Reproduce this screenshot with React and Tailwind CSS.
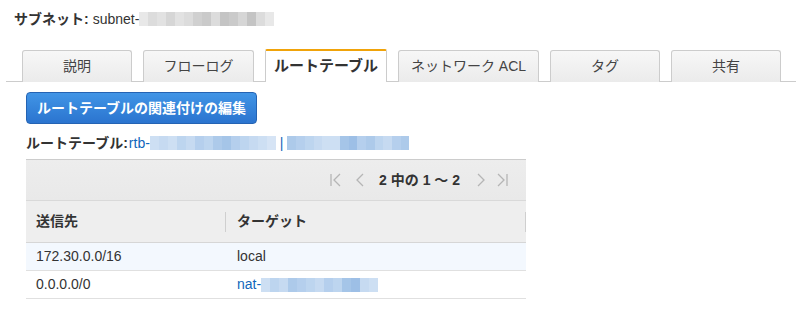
import React from 'react'

const font = { fontFamily: '"Liberation Sans", "Noto Sans CJK JP", sans-serif' }

// pixelated "masked" id blocks
function Mosaic({ cells, color, className = '' }) {
  return (
    <span className={`inline-flex h-[14px] align-middle ${className}`}>
      {cells.map((o, i) => (
        <span key={i} className="h-full w-[9px]" style={{ backgroundColor: color, opacity: o }} />
      ))}
    </span>
  )
}

const grayCells = [0.2, 0.3, 0.25, 0.35, 0.25, 0.3, 0.4, 0.45, 0.3, 0.5, 0.45, 0.35, 0.5, 0.3, 0.2]
const blueCells = [0.3, 0.35, 0.3, 0.4, 0.35, 0.45, 0.4, 0.5, 0.55, 0.45, 0.4, 0.35, 0.3, 0.25]
const blueCells2 = [0.5, 0.45, 0.4, 0.35, 0.3, 0.3, 0.55, 0.6, 0.45, 0.5, 0.4, 0.35, 0.45, 0.5]
const natCells = [0.3, 0.4, 0.35, 0.5, 0.45, 0.4, 0.35, 0.45, 0.4, 0.55, 0.6, 0.35, 0.3]

const tabs = [
  { label: '説明', w: 'w-[110px]' },
  { label: 'フローログ', w: 'w-[111px]' },
  { label: 'ルートテーブル', w: 'w-[122px]', active: true },
  { label: 'ネットワーク ACL', w: 'w-[141px]' },
  { label: 'タグ', w: 'w-[110px]' },
  { label: '共有', w: 'w-[110px]' },
]

function FirstIcon() {
  return (
    <svg width="11" height="14" viewBox="0 0 11 14" fill="none" stroke="#b5b5b5" strokeWidth="1.3">
      <path d="M1 1v12M10 1L4 7l6 6" />
    </svg>
  )
}
function PrevIcon() {
  return (
    <svg width="8" height="14" viewBox="0 0 8 14" fill="none" stroke="#b5b5b5" strokeWidth="1.3">
      <path d="M7 1L1 7l6 6" />
    </svg>
  )
}
function NextIcon() {
  return (
    <svg width="8" height="14" viewBox="0 0 8 14" fill="none" stroke="#b5b5b5" strokeWidth="1.3">
      <path d="M1 1l6 6-6 6" />
    </svg>
  )
}
function LastIcon() {
  return (
    <svg width="11" height="14" viewBox="0 0 11 14" fill="none" stroke="#b5b5b5" strokeWidth="1.3">
      <path d="M1 1l6 6-6 6M10 1v12" />
    </svg>
  )
}

export default function App() {
  return (
    <div className="w-[802px] h-[318px] bg-white text-[#333] overflow-hidden" style={font}>
      {/* title */}
      <div className="pl-[14px] pt-[10px] h-[49px] text-[14px] leading-[18px]">
        <span className="font-bold">サブネット:</span>
        <span className="ml-[4px]">subnet-</span>
        <Mosaic cells={grayCells} color="#8a8a8a" className="-mt-[2px]" />
      </div>

      {/* tabs */}
      <div className="relative ml-[6px] w-[790px] h-[33px] border-b border-[#cccccc] flex gap-[11px] pl-[16px]">
        {tabs.map((t) =>
          t.active ? (
            <div
              key={t.label}
              className={`${t.w} h-[33px] -mb-px bg-white border-x border-[#cccccc] border-t-2 border-t-[#f0a30a] rounded-t-[2px] flex items-center justify-center text-[15px] font-bold text-[#333]`}
            >
              {t.label}
            </div>
          ) : (
            <div
              key={t.label}
              className={`${t.w} h-[32px] mt-px bg-gradient-to-b from-[#f7f7f7] to-[#ebebeb] border border-b-0 border-[#cccccc] rounded-t-[3px] flex items-center justify-center text-[14px] text-[#444]`}
            >
              {t.label}
            </div>
          )
        )}
      </div>

      <div className="pl-[26px]">
        {/* button */}
        <button className="mt-[10px] w-[231px] h-[32px] rounded-[4px] border border-[#2463b3] bg-gradient-to-b from-[#4195e6] to-[#2b74cf] text-white text-[14px] font-bold flex items-center justify-center">
          ルートテーブルの関連付けの編集
        </button>

        {/* route table label */}
        <div className="mt-[10px] h-[18px] flex items-center text-[14px]">
          <span className="font-bold text-[#333]">ルートテーブル:</span>
          <span className="text-[#1166bb] ml-[1px]">rtb-</span>
          <Mosaic cells={blueCells} color="#5b95d6" />
          <span className="text-[#1166bb] mx-[4px]">|</span>
          <Mosaic cells={blueCells2} color="#5b95d6" className="w-[122px] overflow-hidden" />
        </div>

        {/* table */}
        <div className="mt-[7px] w-[500px] border-t border-[#cccccc]">
          <div className="h-[41px] bg-gradient-to-b from-[#ededed] to-[#e9e9e9] border-b border-[#d9d9d9] flex items-center justify-end pr-[18px]">
            <span className="mr-[15px] flex"><FirstIcon /></span>
            <span className="mr-[15px] flex"><PrevIcon /></span>
            <span className="font-bold text-[14px] text-[#333] mr-[17px]">2 中の 1 〜 2</span>
            <span className="mr-[12px] flex"><NextIcon /></span>
            <span className="flex"><LastIcon /></span>
          </div>
          <div className="h-[42px] bg-[#eeeeee] border-b border-[#d6d6d6] flex items-center text-[14px] font-bold text-[#333]">
            <div className="w-[200px] pl-[10px] h-[20px] flex items-center border-r border-[#cfcfcf]">送信先</div>
            <div className="flex-1 pl-[11px] h-[20px] flex items-center border-r border-[#cfcfcf]">ターゲット</div>
          </div>
          <div className="h-[28px] bg-[#f3f8fe] border-b border-[#e0e0e0] flex items-center text-[14px] text-[#333]">
            <div className="w-[200px] pl-[10px]">172.30.0.0/16</div>
            <div className="pl-[11px]">local</div>
          </div>
          <div className="h-[28px] bg-white border-b border-[#e0e0e0] flex items-center text-[14px] text-[#333]">
            <div className="w-[200px] pl-[10px]">0.0.0.0/0</div>
            <div className="pl-[11px] flex items-center">
              <span className="text-[#1166bb]">nat-</span>
              <Mosaic cells={natCells} color="#5b95d6" />
            </div>
          </div>
        </div>
      </div>
    </div>
  )
}
